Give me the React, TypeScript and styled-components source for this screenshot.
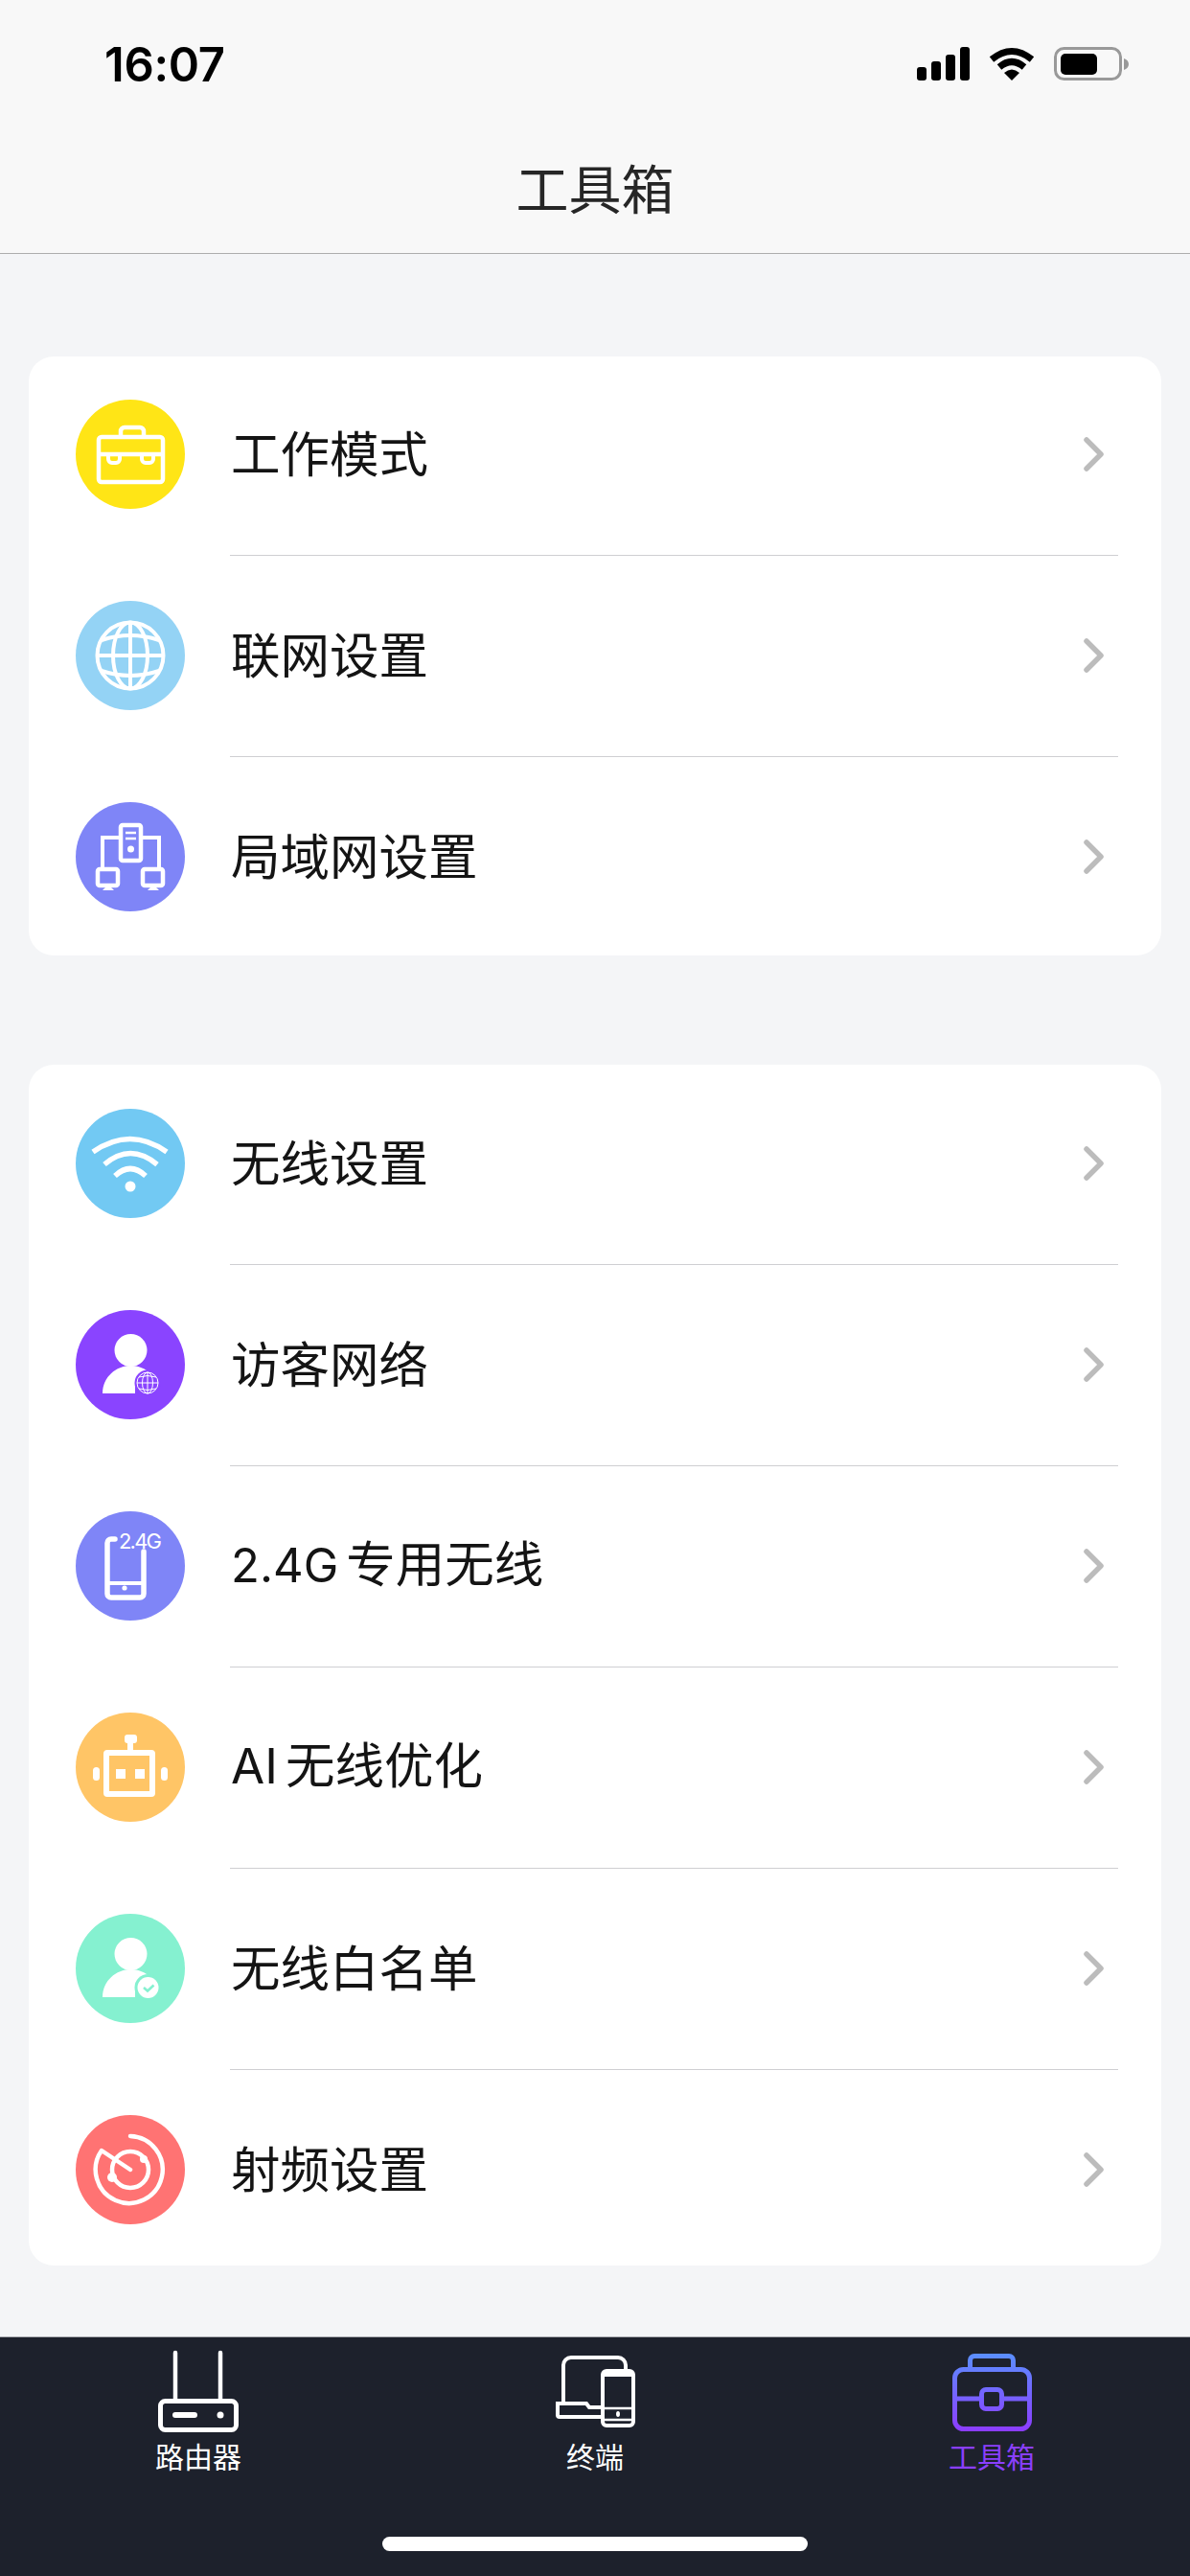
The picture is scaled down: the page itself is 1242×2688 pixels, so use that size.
import { ReactNode } from 'react';
import styled, { createGlobalStyle } from 'styled-components';

const GlobalStyle = createGlobalStyle`
  html, body {
    margin: 0;
    padding: 0;
    background: #f4f5f7;
  }
  * {
    box-sizing: border-box;
  }
`;

const Page = styled.div`
  width: 1242px;
  height: 2688px;
  display: flex;
  flex-direction: column;
  background: #f4f5f7;
  font-family: 'Noto Sans CJK SC', 'Noto Sans', sans-serif;
  overflow: hidden;
`;

const Header = styled.header`
  height: 265px;
  flex-shrink: 0;
  background: #f8f8f8;
  border-bottom: 1px solid #adadad;
`;

const StatusBar = styled.div`
  height: 132px;
  display: flex;
  align-items: flex-start;
  justify-content: space-between;
  padding: 49px 63px 0 109px;
`;

const Time = styled.div`
  font-family: Inter, 'Liberation Sans', sans-serif;
  font-size: 49px;
  line-height: 38px;
  font-weight: 600;
  letter-spacing: -0.3px;
  color: #000;
`;

const StatusIcons = styled.div`
  display: flex;
  align-items: center;
  gap: 20px;
`;

const Title = styled.h1`
  margin: 0;
  height: 130px;
  line-height: 124px;
  text-align: center;
  font-size: 55px;
  font-weight: 400;
  color: #262626;
`;

const Content = styled.main`
  flex: 1;
  padding: 107px 30px 0;
  display: flex;
  flex-direction: column;
  gap: 114px;
`;

const Card = styled.section<{ $top: number; $bottom: number }>`
  background: #fff;
  border-radius: 26px;
  padding: ${(p) => p.$top}px 0 ${(p) => p.$bottom}px;
`;

const Row = styled.div`
  display: grid;
  grid-template-columns: 114px 1fr auto;
  align-items: center;
  padding: 0 59px 0 49px;
  column-gap: 48px;
`;

const Divider = styled.div`
  height: 1px;
  margin: 48px 45px 47px 210px;
  background: #cfcfd2;
`;

const IconCircle = styled.div<{ $color: string }>`
  width: 114px;
  height: 114px;
  border-radius: 50%;
  background: ${(p) => p.$color};

  svg {
    display: block;
  }
`;

const Label = styled.div`
  font-size: 51.5px;
  line-height: 60px;
  margin-bottom: 6px;
  font-weight: 400;
  color: #141414;
`;

const Latin = styled.span<{ $size: number }>`
  margin-right: 8px;
  font-size: ${(p) => p.$size}px;
  font-family: Inter, 'Noto Sans CJK SC', sans-serif;
`;

const TabBar = styled.nav`
  height: 250px;
  flex-shrink: 0;
  display: flex;
  flex-direction: column;
  align-items: center;
  background: #1d212c;
  border-top: 1px solid #a9abb0;
`;

const Tabs = styled.div`
  width: 100%;
  display: grid;
  grid-template-columns: repeat(3, 1fr);
  padding-top: 12px;
`;

const Tab = styled.div<{ $active?: boolean }>`
  display: flex;
  flex-direction: column;
  align-items: center;
  gap: 6px;
  font-size: 30px;
  line-height: 30px;
  color: ${(p) => (p.$active ? '#8a3ffc' : '#fff')};
`;

const HomeBar = styled.div`
  width: 444px;
  height: 15px;
  margin-top: 70px;
  border-radius: 8px;
  background: #fff;
`;

const Glyph = ({ children }: { children: ReactNode }) => (
  <svg width="114" height="114" viewBox="0 0 114 114" fill="none" stroke="#fff" strokeWidth="4">
    {children}
  </svg>
);

const Chevron = () => (
  <svg width="22" height="36" viewBox="0 0 22 36" fill="none">
    <path d="M3 3 L18 18 L3 33" stroke="#bcbcbc" strokeWidth="5.5" strokeLinecap="round" strokeLinejoin="round" />
  </svg>
);

const Briefcase = () => (
  <Glyph>
    <g strokeWidth="4.5">
      <rect x="24" y="39" width="67" height="47" rx="3" />
      <path d="M47 38 V33 a4 4 0 0 1 4-4 H67 a4 4 0 0 1 4 4 V38" />
      <path d="M24 57 H91" />
    </g>
    <path d="M34 57 V62 a4 4 0 0 0 4 4 H42 a4 4 0 0 0 4-4 V57" />
    <path d="M69 57 V62 a4 4 0 0 0 4 4 H77 a4 4 0 0 0 4-4 V57" />
  </Glyph>
);

const Globe = () => (
  <Glyph>
    <circle cx="57" cy="57" r="34.5" />
    <ellipse cx="57" cy="57" rx="18" ry="34.5" />
    <path d="M57 22 V92 M22 57 H92" />
    <path d="M27 41 Q57 31 87 41 M27 73 Q57 83 87 73" />
  </Glyph>
);

const Lan = () => (
  <Glyph>
    <rect x="47" y="24" width="21" height="37" rx="2" strokeWidth="4.5" />
    <path d="M52 32 H63 M52 38 H63" strokeWidth="2.5" />
    <circle cx="57.5" cy="49" r="3.5" fill="#fff" stroke="none" />
    <path d="M47 37 H28 V68 M68 37 H87 V68" />
    <rect x="23" y="70" width="21" height="17" rx="2" strokeWidth="4.5" />
    <rect x="70" y="70" width="21" height="17" rx="2" strokeWidth="4.5" />
    <path d="M28 92 L32 88 H36 L40 92 Z M75 92 L79 88 H83 L87 92 Z" fill="#fff" stroke="none" />
  </Glyph>
);

const Wifi = () => (
  <Glyph>
    <g strokeWidth="5.5">
      <path d="M18 45 Q57 18 95 45" />
      <path d="M30 58 Q57 35 85 58" />
      <path d="M41 70 Q57 55 73 70" />
    </g>
    <circle cx="57" cy="81" r="5.5" fill="#fff" stroke="none" />
  </Glyph>
);

const Person = () => (
  <>
    <circle cx="57.5" cy="42" r="17" fill="#fff" stroke="none" />
    <path d="M28 87 C28 70 42 58 57.5 58 C73 58 87 70 87 87 Z" fill="#fff" stroke="none" />
  </>
);

const GuestNetwork = () => (
  <Glyph>
    <Person />
    <rect x="62" y="80" width="28" height="10" fill="#8a44ff" stroke="none" />
    <circle cx="75" cy="76" r="13.5" fill="#8a44ff" stroke="none" />
    <g strokeWidth="1">
      <circle cx="75" cy="76" r="11" />
      <ellipse cx="75" cy="76" rx="5.5" ry="11" />
      <path d="M75 65 V87 M64 76 H86 M66 70 Q75 67 84 70 M66 82 Q75 85 84 82" />
    </g>
  </Glyph>
);

const Phone24 = () => (
  <Glyph>
    <path d="M41 29 H37 a4 4 0 0 0-4 4 V86 a4 4 0 0 0 4 4 H67 a4 4 0 0 0 4-4 V42" strokeWidth="5.5" strokeLinecap="round" />
    <path d="M33 75 H71" />
    <circle cx="51" cy="80" r="2.6" fill="#fff" stroke="none" />
    <text x="45" y="39" fill="#fff" stroke="none" fontSize="22" fontFamily="Inter, sans-serif" textLength="45">
      2.4G
    </text>
  </Glyph>
);

const Robot = () => (
  <Glyph>
    <rect x="32" y="42" width="48" height="43" rx="1" strokeWidth="6" />
    <rect x="42" y="59" width="10" height="10" fill="#fff" stroke="none" />
    <rect x="62" y="59" width="10" height="10" fill="#fff" stroke="none" />
    <rect x="51" y="23" width="13" height="9" rx="3" fill="#fff" stroke="none" />
    <rect x="54" y="30" width="6" height="10" fill="#fff" stroke="none" />
    <rect x="18" y="57" width="7" height="14" rx="3.5" fill="#fff" stroke="none" />
    <rect x="89" y="57" width="7" height="14" rx="3.5" fill="#fff" stroke="none" />
  </Glyph>
);

const Whitelist = () => (
  <Glyph>
    <Person />
    <rect x="62" y="80" width="28" height="10" fill="#85f1d0" stroke="none" />
    <circle cx="75.5" cy="77" r="14" fill="#85f1d0" stroke="none" />
    <circle cx="75.5" cy="77" r="11" fill="#fff" stroke="none" />
    <path d="M71 77 L75 80.5 L81.5 74.5" stroke="#85f1d0" strokeWidth="2.6" />
  </Glyph>
);

const Radar = () => (
  <Glyph>
    <g strokeWidth="4.5">
      <path d="M57 22 A35 35 0 1 1 27 37 L57 57" strokeLinecap="round" strokeLinejoin="round" />
      <circle cx="57" cy="57" r="19" />
    </g>
    <circle cx="71" cy="46" r="4" fill="#fff" stroke="none" />
    <circle cx="38" cy="65" r="5" fill="#fff" stroke="none" />
  </Glyph>
);

const RouterTab = () => (
  <svg width="90" height="90" viewBox="0 0 90 90" fill="none" stroke="#fff">
    <rect x="5.5" y="54.5" width="79" height="30" rx="5" strokeWidth="5" />
    <path d="M21 4 V52 M68 4 V52" strokeWidth="4.5" strokeLinecap="round" />
    <rect x="18" y="66" width="26" height="6" rx="3" fill="#fff" stroke="none" />
    <circle cx="68" cy="69" r="3.5" fill="#fff" stroke="none" />
  </svg>
);

const DevicesTab = () => (
  <svg width="90" height="90" viewBox="0 0 90 90" fill="none" stroke="#fff" strokeWidth="4">
    <path d="M12 55 V17 a8 8 0 0 1 8-8 H69 a8 8 0 0 1 8 8 V21" />
    <path d="M51 71 H8 a2 2 0 0 1-2-2 V57 H36 l3 4 H51" />
    <rect x="53" y="23" width="32" height="57" rx="4" />
    <path d="M53 27 H85" />
    <path d="M53 62 H85 M53 74 H85" strokeWidth="2.5" />
    <ellipse cx="69" cy="68" rx="2" ry="3" fill="#fff" stroke="none" />
  </svg>
);

const ToolboxTab = () => (
  <svg width="90" height="90" viewBox="0 0 90 90" fill="none" stroke="url(#toolbox)" strokeWidth="5">
    <defs>
      <linearGradient id="toolbox" gradientUnits="userSpaceOnUse" x1="45" y1="5" x2="45" y2="86">
        <stop offset="0" stopColor="#5b8fff" />
        <stop offset="1" stopColor="#8c3cff" />
      </linearGradient>
    </defs>
    <rect x="6.5" y="21.5" width="78" height="62" rx="9" />
    <path d="M22.5 21 V12 a4.5 4.5 0 0 1 4.5-4.5 H63 a4.5 4.5 0 0 1 4.5 4.5 V21" />
    <path d="M6 52 H33 M57 52 H85" />
    <rect x="34.5" y="42.5" width="21" height="20" rx="4.5" />
  </svg>
);

type MenuItem = { color: string; icon: ReactNode; label: ReactNode };

const networkItems: MenuItem[] = [
  { color: '#ffe516', icon: <Briefcase />, label: '工作模式' },
  { color: '#94d3f5', icon: <Globe />, label: '联网设置' },
  { color: '#7f85f7', icon: <Lan />, label: '局域网设置' },
];

const wirelessItems: MenuItem[] = [
  { color: '#72c9f3', icon: <Wifi />, label: '无线设置' },
  { color: '#8a44ff', icon: <GuestNetwork />, label: '访客网络' },
  { color: '#7f85f7', icon: <Phone24 />, label: <><Latin $size={49}>2.4G</Latin>专用无线</> },
  { color: '#ffc566', icon: <Robot />, label: <><Latin $size={51}>AI</Latin>无线优化</> },
  { color: '#85f1d0', icon: <Whitelist />, label: '无线白名单' },
  { color: '#ff7373', icon: <Radar />, label: '射频设置' },
];

const MenuCard = ({ items, top, bottom }: { items: MenuItem[]; top: number; bottom: number }) => (
  <Card $top={top} $bottom={bottom}>
    {items.map((item, i) => (
      <div key={i}>
        <Row>
          <IconCircle $color={item.color}>{item.icon}</IconCircle>
          <Label>{item.label}</Label>
          <Chevron />
        </Row>
        {i < items.length - 1 && <Divider />}
      </div>
    ))}
  </Card>
);

export default function App() {
  return (
    <Page>
      <GlobalStyle />
      <Header>
        <StatusBar>
          <Time>16:07</Time>
          <StatusIcons>
            <svg width="55" height="36" viewBox="0 0 55 36" fill="#000">
              <rect x="0" y="21" width="10" height="14" rx="3" />
              <rect x="15" y="15" width="10" height="20" rx="3" />
              <rect x="30" y="8" width="10" height="27" rx="3" />
              <rect x="45" y="0" width="10" height="35" rx="3" />
            </svg>
            <svg width="48" height="36" viewBox="0 0 48 36" fill="none" stroke="#000">
              <path d="M3 13 Q24 -4 45 13" strokeWidth="7" />
              <path d="M11 21 Q24 10 37 21" strokeWidth="7" />
              <path d="M16 27 L24 35 L32 27 Q24 20 16 27 Z" fill="#000" stroke="none" />
            </svg>
            <svg width="79" height="36" viewBox="0 0 79 36" fill="none">
              <rect x="1.5" y="1.5" width="68" height="32" rx="9" stroke="#999" strokeWidth="3" />
              <rect x="7" y="7" width="38" height="22" rx="5" fill="#000" />
              <path d="M73 12 C76 13 78 15 78 18 C78 21 76 23 73 24 Z" fill="#999" />
            </svg>
          </StatusIcons>
        </StatusBar>
        <Title>工具箱</Title>
      </Header>

      <Content>
        <MenuCard items={networkItems} top={45} bottom={46} />
        <MenuCard items={wirelessItems} top={46} bottom={43} />
      </Content>

      <TabBar>
        <Tabs>
          <Tab>
            <RouterTab />
            路由器
          </Tab>
          <Tab>
            <DevicesTab />
            终端
          </Tab>
          <Tab $active>
            <ToolboxTab />
            工具箱
          </Tab>
        </Tabs>
        <HomeBar />
      </TabBar>
    </Page>
  );
}
